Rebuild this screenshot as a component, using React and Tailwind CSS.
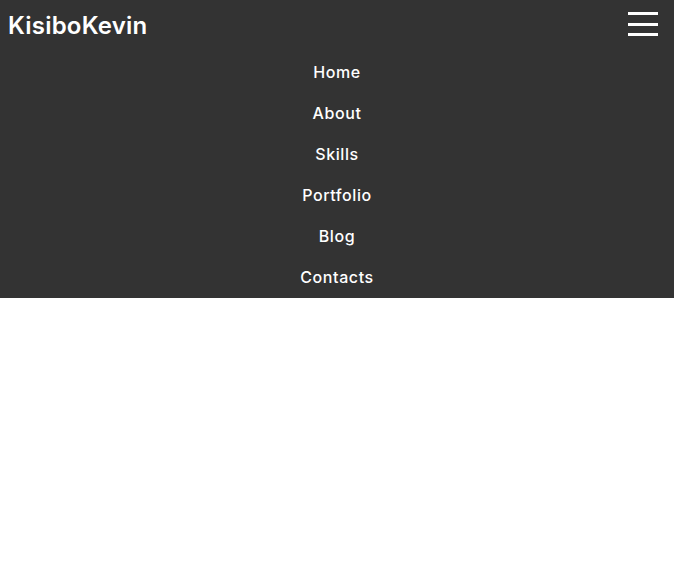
import { useState } from "react";

const links = ["Home", "About", "Skills", "Portfolio", "Blog", "Contacts"];

export default function App() {
  const [open, setOpen] = useState(true);

  return (
    <div className="min-h-[581px] bg-white font-['Inter',sans-serif]">
      <header className="bg-[#333333] text-white">
        {/* Top bar */}
        <div className="flex h-[52px] items-center justify-between pl-2 pr-4">
          <a href="#" className="text-[24px] font-semibold leading-none tracking-[0.2px]">
            KisiboKevin
          </a>
          <button
            onClick={() => setOpen(!open)}
            className="flex h-[24px] w-[30px] flex-col justify-between self-start mt-3"
          >
            <span className="block h-[3px] w-full bg-white" />
            <span className="block h-[3px] w-full bg-white" />
            <span className="block h-[3px] w-full bg-white" />
          </button>
        </div>

        {/* Menu */}
        {open && (
          <nav>
            <ul className="flex flex-col">
              {links.map((l) => (
                <li key={l} className="flex h-[41px] items-center justify-center pb-[2px]">
                  <a href="#" className="text-[16px] font-medium tracking-[0.6px]">
                    {l}
                  </a>
                </li>
              ))}
            </ul>
          </nav>
        )}
      </header>
    </div>
  );
}
